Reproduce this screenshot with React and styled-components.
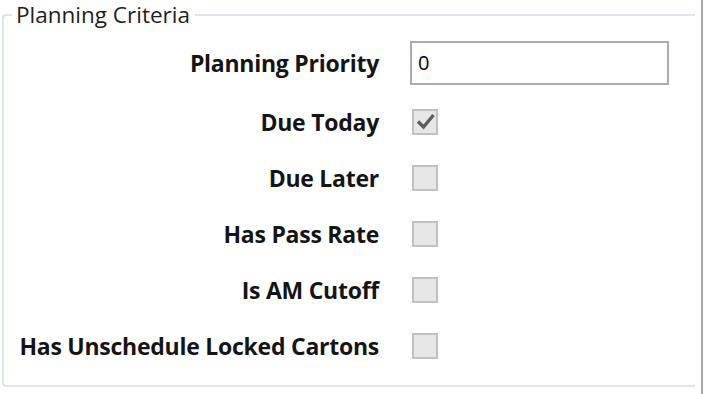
import React, { useState } from "react";
import styled, { createGlobalStyle } from "styled-components";

const GlobalStyle = createGlobalStyle`
  html, body {
    margin: 0;
    padding: 0;
    background: #ffffff;
  }
  body {
    font-family: "Open Sans", "Noto Sans", sans-serif;
  }
`;

const criteria = [
  { label: "Due Today", checked: true },
  { label: "Due Later", checked: false },
  { label: "Has Pass Rate", checked: false },
  { label: "Is AM Cutoff", checked: false },
  { label: "Has Unschedule Locked Cartons", checked: false },
];

const App = () => {
  const [priority, setPriority] = useState("0");
  const [values, setValues] = useState(criteria.map((c) => c.checked));

  const toggle = (index) => {
    setValues(values.map((v, i) => (i === index ? !v : v)));
  };

  return (
    <Page>
      <GlobalStyle />
      <GroupBox>
        <Legend>Planning Criteria</Legend>
        <FormGrid>
          <Label>Planning Priority</Label>
          <Control>
            <TextBox
              value={priority}
              onChange={(e) => setPriority(e.target.value)}
            />
          </Control>
          {criteria.map((item, i) => (
            <React.Fragment key={item.label}>
              <Label>{item.label}</Label>
              <Control>
                <CheckBox onClick={() => toggle(i)}>
                  {values[i] && (
                    <svg width="22" height="22" viewBox="0 0 22 22">
                      <path
                        d="M4 10.5 L9.5 16 L19.5 4"
                        fill="none"
                        stroke="#5e5e5e"
                        strokeWidth="3.4"
                      />
                    </svg>
                  )}
                </CheckBox>
              </Control>
            </React.Fragment>
          ))}
        </FormGrid>
      </GroupBox>
      <Splitter />
    </Page>
  );
};

export default App;

const Page = styled.div`
  display: flex;
  width: 710px;
  height: 394px;
  overflow: hidden;
`;

const GroupBox = styled.fieldset`
  box-sizing: border-box;
  width: 693px;
  height: 387px;
  margin: 0 0 0 2px;
  padding: 0;
  border: 2px solid #dde4ea;
  border-right: none;
  border-radius: 4px 0 0 4px;
  min-width: 0;
`;

const Legend = styled.legend`
  margin-left: 8px;
  padding: 0 5px 0 4px;
  font-size: 22.5px;
  line-height: 30px;
  color: #1e1e1e;
`;

const FormGrid = styled.div`
  display: grid;
  grid-template-columns: 375px 259px;
  grid-template-rows: 63px repeat(5, 56px);
  column-gap: 31px;
  padding-top: 1px;
`;

const Label = styled.div`
  display: flex;
  align-items: center;
  justify-content: flex-end;
  font-size: 23px;
  font-weight: 700;
  letter-spacing: -0.25px;
  color: #141414;
  white-space: nowrap;
`;

const Control = styled.div`
  display: flex;
  align-items: center;
`;

const TextBox = styled.input`
  box-sizing: border-box;
  width: 259px;
  height: 44px;
  border: 2px solid #acacac;
  padding: 0 6px;
  font-family: "Open Sans", "Noto Sans", sans-serif;
  font-size: 20px;
  color: #000000;
  background: #ffffff;
  outline: none;
`;

const CheckBox = styled.span`
  box-sizing: border-box;
  display: flex;
  align-items: center;
  justify-content: center;
  width: 26px;
  height: 26px;
  margin-left: 2px;
  border: 2px solid #c0c0c0;
  background: #e7e7e7;
  cursor: pointer;
`;

const Splitter = styled.div`
  width: 2px;
  height: 100%;
  margin-left: 6px;
  background: #a9a9a9;
`;
